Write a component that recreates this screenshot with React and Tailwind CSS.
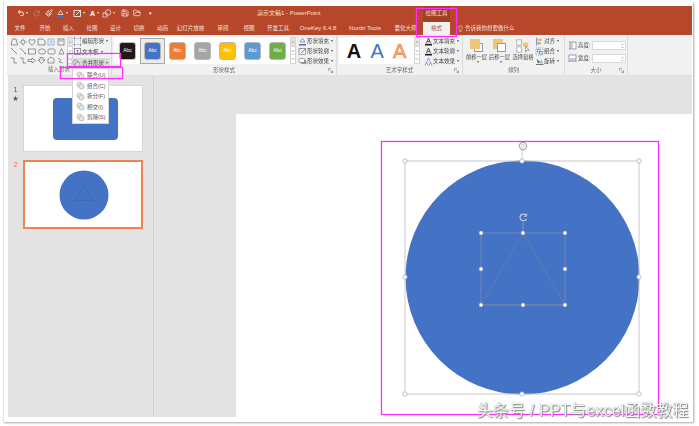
import {Undo2, RotateCw, Paintbrush, Save, FolderOpen, Lightbulb, ChevronDown, ChevronUp} from 'lucide-react';

const FONT = 'font-["Liberation_Sans","Noto_Sans_CJK_SC",sans-serif]';

const tabs = [
    ['文件', 'w-[26px] text-[5.5px]'],
    ['开始', 'w-[24px] text-[5.5px]'],
    ['插入', 'w-[23px] text-[5.5px]'],
    ['绘图', 'w-[24px] text-[5.5px]'],
    ['设计', 'w-[23px] text-[5.5px]'],
    ['切换', 'w-[24px] text-[5.5px]'],
    ['动画', 'w-[23px] text-[5.5px]'],
    ['幻灯片放映', 'w-[33px] text-[5.5px]'],
    ['审阅', 'w-[32px] text-[5.5px]'],
    ['视图', 'w-[20px] text-[5.5px]'],
    ['开发工具', 'w-[38px] text-[5.5px]'],
    ['OneKey 6.4.8', 'w-[42px] text-[6px]'],
    ['Nordri Tools', 'w-[52px] text-[6px]'],
    ['囊化大师', 'w-[29px] text-[5.5px]'],
];

const swatches = ['bg-[#231815]', 'bg-[#4472c4]', 'bg-[#ed7d31]', 'bg-[#a5a5a5]', 'bg-[#ffc000]', 'bg-[#5b9bd5]', 'bg-[#70ad47]'];

const mergeItems = ['联合(U)', '组合(C)', '拆分(F)', '相交(I)', '剪除(S)'];

const PINK = 'absolute border border-[#ff2eff] shadow-[0_0_1px_#ff33ff,inset_0_0_1px_#ff33ff]';

const Caret = () => <span className="ml-[2px] inline-block border-x-[1.5px] border-t-[2px] border-x-transparent border-t-[#555]"></span>;

const QatCaret = () => <span className="inline-block w-0 border-x-[1.5px] border-t-[2px] border-x-transparent border-t-[#f6e3dc] ml-[1px]"></span>;

const Launcher = () => (
    <svg width="5" height="5" viewBox="0 0 5 5" className="absolute right-[3px] bottom-[2px]">
        <path d="M.5 .5H3M.5 .5V3M2 2L4.5 4.5M4.5 2.5V4.5H2.5" stroke="#777" strokeWidth=".6" fill="none" />
    </svg>
);

const Scroller = () => (
    <div className="flex flex-col w-[6px] h-[27px] border border-[#d4d4d4] bg-white text-[#555]">
        <div className="flex-1 flex items-center justify-center bg-[#e4e4e4]"><ChevronUp size={4} strokeWidth={3} /></div>
        <div className="flex-1 flex items-center justify-center border-y border-[#d4d4d4]"><ChevronDown size={4} strokeWidth={3} /></div>
        <div className="flex-1 flex items-center justify-center"><ChevronDown size={4} strokeWidth={3} /></div>
    </div>
);

const MenuRow = ({icon, label}) => (
    <div className="flex items-center h-[10.5px] text-[5.5px] text-[#444] whitespace-nowrap">
        <span className="w-[9px] flex justify-center shrink-0">{icon}</span>
        <span>{label}</span>
        <Caret />
    </div>
);

const Group = ({label, className, launcher, children}) => (
    <div className={`relative flex flex-col border-r border-[#dadada] h-full ${className}`}>
        <div className="flex h-[31px]">{children}</div>
        <div className="h-[10px] text-center text-[5.5px] leading-[9px] text-[#666]">{label}</div>
        {launcher && <Launcher />}
    </div>
);

const ShapeGallery = () => (
    <svg width="58" height="28" viewBox="0 0 58 28" fill="none" stroke="#555" strokeWidth=".6">
        <path d="M2 8L3.5 2H7L8.5 8Z" />
        <circle cx="14" cy="5" r="2" /><path d="M14 1.5V2.5M14 7.5V8.5M10.5 5H11.5M16.5 5H17.5" />
        <path d="M23 8.5L20 5Q19.5 2 22 2.5L23 3.5L24 2.5Q26.5 2 26 5Z" />
        <path d="M29 2H34L36 4V8H29Z" />
        <rect x="39" y="2" width="6" height="6" stroke="#5b9bd5" /><rect x="40.5" y="3.5" width="3" height="3" fill="#bcd" stroke="none" />
        <rect x="49" y="2" width="6" height="6" /><path d="M50 4H54" />
        <path d="M2 11L8 17M11 11L17 17L15.5 16.5" />
        <rect x="19.5" y="12" width="7" height="5" />
        <ellipse cx="33" cy="14.5" rx="3.5" ry="2.6" />
        <rect x="39" y="12" width="7" height="5" rx="1.5" />
        <path d="M50 17L52.5 11.5L55 17Z" />
        <path d="M2 21H5V26H8M11 21H14V26H17" />
        <path d="M19 22.5H23V21L26.5 23.5L23 26V24.5H19Z" />
        <path d="M31 20.5H34V23H36L32.5 26.5L29 23H31Z" />
        <path d="M39 26V22L42 20L45 22V26Z" />
        <path d="M49 21L52 23L50 25L54 26" />
    </svg>
);

const TinyIcon = ({kind}) => {
    if (kind === 'fill') return <svg width="9" height="9" viewBox="0 0 9 9"><path d="M2 5L4.5 1.5L7 5Z" fill="#fff" stroke="#555" strokeWidth=".6" /><rect x="1" y="7" width="7" height="1.5" fill="#4472c4" /></svg>;
    if (kind === 'line') return <svg width="9" height="9" viewBox="0 0 9 9"><rect x="1" y="1.5" width="6.5" height="6" fill="#fff" stroke="#666" strokeWidth=".6" /><path d="M3 6L8 1.5" stroke="#4472c4" strokeWidth="1" /></svg>;
    if (kind === 'effect') return <svg width="9" height="9" viewBox="0 0 9 9"><rect x="3" y="3" width="5.5" height="4" rx="1" fill="#999" /><rect x="1" y="1.5" width="5.5" height="4" rx="1" fill="#fff" stroke="#666" strokeWidth=".6" /></svg>;
    if (kind === 'textFill') return <svg width="9" height="9" viewBox="0 0 9 9"><path d="M2.5 6L4.5 1L6.5 6M3.3 4.5H5.7" stroke="#333" strokeWidth=".8" fill="none" /><rect x="1" y="6.8" width="7" height="1.7" fill="#222" /></svg>;
    if (kind === 'textEffect') return <svg width="9" height="9" viewBox="0 0 9 9" fill="none" stroke="#5b7fb5" strokeWidth=".7"><path d="M3 4.5L4.5 1L6 4.5" /><path d="M1 8.5L2.5 5L4 8.5M5 8.5L6.5 5L8 8.5" /></svg>;
    if (kind === 'edit') return <svg width="9" height="9" viewBox="0 0 9 9"><rect x="1.5" y="1.5" width="6" height="6" fill="none" stroke="#4472c4" strokeWidth=".6" strokeDasharray="1 1" /><path d="M1 1h1M7 1h1M1 8h1M7 8h1" stroke="#333" strokeWidth="1" /></svg>;
    if (kind === 'box') return <svg width="9" height="9" viewBox="0 0 9 9"><rect x="1.5" y="1.5" width="6" height="6" fill="#fff" stroke="#555" strokeWidth=".6" /><path d="M3 3.5H6M4.5 3.5V6" stroke="#555" strokeWidth=".6" /></svg>;
    if (kind === 'merge') return <svg width="9" height="9" viewBox="0 0 9 9" fill="#ddd" stroke="#777" strokeWidth=".6"><circle cx="3.5" cy="3.5" r="2.5" /><circle cx="5.5" cy="5.5" r="2.5" /></svg>;
    if (kind === 'align') return <svg width="9" height="9" viewBox="0 0 9 9"><path d="M1.5 .5V8.5" stroke="#4472c4" strokeWidth=".7" /><rect x="2.5" y="1.5" width="4" height="2.5" fill="#e9b35f" /><rect x="2.5" y="5" width="3" height="2.5" fill="#aaa" /></svg>;
    if (kind === 'group') return <svg width="9" height="9" viewBox="0 0 9 9"><rect x="1" y="1" width="7" height="7" fill="none" stroke="#4472c4" strokeWidth=".6" strokeDasharray="1 1" /><rect x="2.5" y="2.5" width="2.5" height="2.5" fill="#fff" stroke="#555" strokeWidth=".5" /><rect x="4.5" y="4.5" width="2.5" height="2.5" fill="#fff" stroke="#555" strokeWidth=".5" /></svg>;
    return <svg width="9" height="9" viewBox="0 0 9 9"><path d="M1 7.5H8.5" stroke="#555" strokeWidth=".8" /><path d="M3 6.5L1.5 2L5 5Z" fill="#555" /><path d="M6 2L8 6.5H5Z" fill="#8bb" /></svg>;
};

const ArrangeBig = ({label, back}) => (
    <div className="flex flex-col items-center w-[23px]">
        <div className="relative w-[13px] h-[14px] mt-[4px]">
            {back ? (
                <>
                    <div className="w-[10px] h-[10px] bg-[#efc778]"></div>
                    <div className="absolute left-[4px] top-[4px] w-[9px] h-[9px] bg-white border border-[#999]"></div>
                </>
            ) : (
                <>
                    <div className="absolute left-[4px] top-[4px] w-[9px] h-[9px] bg-white border border-[#999]"></div>
                    <div className="absolute left-0 top-0 w-[10px] h-[10px] bg-[#efc778]"></div>
                </>
            )}
        </div>
        <div className="text-[5.25px] leading-[8px] text-[#444] whitespace-nowrap">{label}</div>
        <Caret />
    </div>
);

const SizeRow = ({label, tall}) => (
    <div className="flex items-center h-[9px] mb-[4px] text-[5.5px] text-[#444]">
        <span className="w-[11px] flex justify-center">
            {tall ? (
                <svg width="9" height="9" viewBox="0 0 9 9"><path d="M1 1H3M1 8H3M2 1V8" stroke="#4472c4" strokeWidth=".7" /><rect x="4" y="1" width="4" height="7" fill="#fff" stroke="#666" strokeWidth=".6" /></svg>
            ) : (
                <svg width="9" height="9" viewBox="0 0 9 9"><path d="M1 7H8M1 6V8M8 6V8" stroke="#4472c4" strokeWidth=".7" /><rect x="1" y="1" width="7" height="4" fill="#fff" stroke="#666" strokeWidth=".6" /></svg>
            )}
        </span>
        <span className="w-[14px]">{label}</span>
        <div className="flex items-center justify-end w-[34px] h-[9px] bg-white border border-[#d8d8d8] pr-[1px] text-[#555]">
            <div className="flex flex-col">
                <ChevronUp size={3} strokeWidth={4} />
                <ChevronDown size={3} strokeWidth={4} />
            </div>
        </div>
    </div>
);

const SlideCanvas = () => {
    const handles = [[405, 161], [522, 161], [639, 161], [405, 277], [639, 277], [405, 394], [522, 394], [639, 394]];
    const inner = [[481, 233], [523, 233], [565, 233], [481, 269], [565, 269], [481, 305], [523, 305], [565, 305]];
    return (
        <svg className="block" width="456" height="303" viewBox="236 114 456 303" fill="none">
            <circle cx="522.5" cy="277.5" r="117" fill="#4472c4" />
            <rect x="405" y="161" width="234" height="233" stroke="#c8c8c8" strokeWidth="1" />
            <path d="M522 161V150" stroke="#c8c8c8" strokeWidth=".9" />
            <circle cx="523" cy="146" r="3.6" stroke="#aaa" strokeWidth="1.2" />
            <circle cx="523" cy="146" r="1.6" stroke="#bbb" strokeWidth=".7" />
            {handles.map(([x, y]) => <circle key={`${x}-${y}`} cx={x} cy={y} r="2.2" fill="#fff" stroke="#aaa" strokeWidth=".7" />)}
            <path d="M523 233L481 305H565Z" stroke="#6d7f9f" strokeWidth=".8" />
            <rect x="481" y="233" width="84" height="72" stroke="#8d97ab" strokeWidth=".6" />
            <path d="M523 233V222" stroke="#aab3c6" strokeWidth=".6" />
            <path d="M526 215.2A3.4 3.4 0 1 0 526.4 219" stroke="#ddd" strokeWidth="1.1" />
            <path d="M526.6 213.5V216.2H524" stroke="#ddd" strokeWidth=".8" />
            {inner.map(([x, y]) => <circle key={`${x}-${y}`} cx={x} cy={y} r="1.9" fill="#fff" stroke="#999" strokeWidth=".4" />)}
        </svg>
    );
};

const App = () => {
    return (
        <div className={`relative w-[699px] h-[426px] bg-white overflow-hidden ${FONT}`}>
            <div className="blur-[0.4px]">
                <div className="ml-[3px] mt-[2px] w-[690px] h-[420px] pl-[3px] pt-[4px] bg-white border-l border-[#e4e4e4] shadow-[1px_1px_2px_#a8a8a8]">
                    <div className="w-[685px] h-[411px] flex flex-col">
                        {/* title + tabs */}
                        <div className="h-[29px] bg-[#b7472a] text-[#f6e3dc] shrink-0">
                            <div className="flex h-[16px] items-start">
                                <div className="w-[250px] h-[14px] flex items-center pl-[10px] text-white">
                                    <Undo2 size={8} strokeWidth={2.5} />
                                    <QatCaret />
                                    <RotateCw size={7} className="ml-[5px] opacity-40" />
                                    <Paintbrush size={8} className="ml-[5px]" />
                                    <svg width="9" height="9" viewBox="0 0 9 9" className="ml-[3px]"><path d="M2 5.5L4.5 1.5L7 5.5Z" fill="none" stroke="#fff" strokeWidth=".7" /><rect x="1" y="7" width="7" height="1.6" fill="#4472c4" /></svg>
                                    <QatCaret />
                                    <svg width="9" height="9" viewBox="0 0 9 9" fill="none" stroke="#fff" strokeWidth=".8" className="ml-[5px]"><rect x="1" y="1.5" width="6.5" height="6" /><path d="M3 6L8 1" /></svg>
                                    <QatCaret />
                                    <span className="ml-[5px] w-[6px] text-[7px] font-bold leading-none">A</span>
                                    <QatCaret />
                                    <svg width="10" height="9" viewBox="0 0 10 9" fill="none" stroke="#fff" strokeWidth=".6" className="ml-[3px]"><circle cx="6" cy="3.5" r="2.8" /><rect x="1" y="4" width="4" height="4" /></svg>
                                    <QatCaret />
                                    <Save size={8} className="ml-[6px]" />
                                    <FolderOpen size={8} className="ml-[4px]" />
                                    <span className="ml-[8px] text-[5px] leading-none">▾</span>
                                </div>
                                <div className="w-[60px] text-center text-[6px] leading-[14px] whitespace-nowrap">演示文稿1 - PowerPoint</div>
                                <div className="w-[106px]"></div>
                                <div className="w-[27px] h-[16px] bg-[#a33e25] text-center text-[5.5px] leading-[14px]">绘图工具</div>
                            </div>
                            <div className="flex h-[13px] items-start">
                                {tabs.map(([name, cls]) => (
                                    <div key={name} className={`${cls} text-center leading-[12px] whitespace-nowrap shrink-0`}>{name}</div>
                                ))}
                                <div className="ml-[3px] w-[27px] h-[13px] bg-[#f1f1f1] text-center text-[5.5px] leading-[13px] text-[#b7472a]">格式</div>
                                <div className="ml-[7px] flex items-center gap-[1px] h-[12px] text-[5.5px] whitespace-nowrap">
                                    <Lightbulb size={7} />
                                    <span>告诉我你想要做什么</span>
                                </div>
                            </div>
                        </div>

                        {/* ribbon */}
                        <div className="flex h-[41px] bg-[#f1f1f1] border-b border-[#e0e0e0] shrink-0">
                            <Group label="插入形状" className="w-[105px]" launcher>
                                <div className="ml-[2px] mt-[2px] flex">
                                    <ShapeGallery />
                                    <Scroller />
                                </div>
                                <div className="flex flex-col pt-[1px]">
                                    <MenuRow icon={<TinyIcon kind="edit" />} label="编辑形状" />
                                    <MenuRow icon={<TinyIcon kind="box" />} label="文本框" />
                                </div>
                            </Group>
                            <Group label="形状样式" className="w-[225px]" launcher>
                                <div className="ml-[2px] mt-[2px] flex">
                                    <div className="w-[176px] h-[27px] bg-white flex items-center pl-[5px] gap-[8px]">
                                        {swatches.map((color, i) => (
                                            <div key={color} className={i === 1 ? '-mx-[4px] p-[3px] border border-[#a8a8a8] bg-[#ececec]' : ''}>
                                                <div className={`${color} w-[17px] h-[18px] rounded-[3px] border border-[#b9b9b9] flex items-center justify-center text-[5px] text-white`}>Abc</div>
                                            </div>
                                        ))}
                                    </div>
                                    <Scroller />
                                </div>
                                <div className="flex flex-col pt-[1px] ml-[2px]">
                                    <MenuRow icon={<TinyIcon kind="fill" />} label="形状填充" />
                                    <MenuRow icon={<TinyIcon kind="line" />} label="形状轮廓" />
                                    <MenuRow icon={<TinyIcon kind="effect" />} label="形状效果" />
                                </div>
                            </Group>
                            <Group label="艺术字样式" className="w-[126px]" launcher>
                                <div className="ml-[2px] mt-[2px] flex">
                                    <div className="w-[75px] h-[27px] bg-white flex items-center justify-around px-[3px] text-[20px] leading-none">
                                        <span className="text-[#111] font-bold">A</span>
                                        <span className="text-[#4472c4]">A</span>
                                        <span className="text-[#f4b183] [-webkit-text-stroke:0.6px_#ed7d31]">A</span>
                                    </div>
                                    <Scroller />
                                </div>
                                <div className="flex flex-col pt-[1px] ml-[4px]">
                                    <MenuRow icon={<TinyIcon kind="textFill" />} label="文本填充" />
                                    <MenuRow icon={<TinyIcon kind="textFill" />} label="文本轮廓" />
                                    <MenuRow icon={<TinyIcon kind="textEffect" />} label="文本效果" />
                                </div>
                            </Group>
                            <Group label="排列" className="w-[102px]">
                                <div className="flex pl-[2px] w-[72px]">
                                    <ArrangeBig label="前移一层" />
                                    <ArrangeBig label="后移一层" back />
                                    <div className="flex flex-col items-center w-[24px]">
                                        <svg width="16" height="14" viewBox="0 0 16 16" className="mt-[4px]">
                                            <rect x="1" y="1" width="5" height="6" fill="#fff" stroke="#888" strokeWidth=".7" />
                                            <rect x="1" y="9" width="5" height="6" fill="#fff" stroke="#888" strokeWidth=".7" />
                                            <rect x="8" y="4" width="6" height="5" fill="#efc778" />
                                            <path d="M11 8L15 13L12.5 12.5L11 15Z" fill="#fff" stroke="#666" strokeWidth=".6" />
                                        </svg>
                                        <div className="text-[5.25px] leading-[8px] text-[#444] whitespace-nowrap">选择窗格</div>
                                    </div>
                                </div>
                                <div className="flex flex-col pt-[1px]">
                                    <MenuRow icon={<TinyIcon kind="align" />} label="对齐" />
                                    <MenuRow icon={<TinyIcon kind="group" />} label="组合" />
                                    <MenuRow icon={<TinyIcon kind="rotate" />} label="旋转" />
                                </div>
                            </Group>
                            <Group label="大小" className="w-[63px]" launcher>
                                <div className="flex flex-col pt-[6px] pl-[2px]">
                                    <SizeRow label="高度:" tall />
                                    <SizeRow label="宽度:" />
                                </div>
                            </Group>
                        </div>

                        {/* thumbnails + slide */}
                        <div className="flex flex-1 min-h-0 bg-[#e3e3e3] ml-[1px]">
                            <div className="w-[146px] shrink-0 border-r border-[#d0d0d0] pt-[9px]">
                                <div className="flex">
                                    <div className="w-[15px] text-center text-[7px] leading-[9px] text-[#555]">
                                        <div>1</div>
                                        <div className="text-[6px]">★</div>
                                    </div>
                                    <div className="w-[120px] h-[67px] bg-white border border-[#d6d6d6] flex justify-center pt-[12px] pl-[5px]">
                                        <div className="w-[65px] h-[42px] rounded-[4px] bg-[#4472c4]"></div>
                                    </div>
                                </div>
                                <div className="flex mt-[8px]">
                                    <div className="w-[15px] text-center text-[7px] leading-[9px] text-[#e2744b]">2</div>
                                    <div className="w-[120px] h-[69px] bg-white border-2 border-[#ef8352] flex items-center justify-center pl-[2px]">
                                        <svg width="50" height="50" viewBox="0 0 50 50">
                                            <circle cx="25" cy="25" r="24.5" fill="#4472c4" />
                                            <path d="M25 15.5L16.5 30.5H33.5Z" fill="none" stroke="#3f66ae" strokeWidth=".8" />
                                        </svg>
                                    </div>
                                </div>
                            </div>
                            <div className="flex-1 pt-[38px] pl-[82px]">
                                <div className="bg-white h-[303px] w-[456px]">
                                    <SlideCanvas />
                                </div>
                            </div>
                        </div>
                    </div>
                </div>

                {/* merge shapes dropdown */}
                <div className="absolute left-[71px] top-[56px] w-[39px] h-[10px] bg-[#dcdcdc]">
                    <div className="flex items-center h-full text-[5.5px] text-[#444] whitespace-nowrap">
                        <span className="w-[11px] flex justify-center"><TinyIcon kind="merge" /></span>
                        <span>合并形状</span>
                        <Caret />
                    </div>
                </div>
                <div className="absolute left-[72px] top-[66px] w-[37px] h-[56px] bg-white border border-[#d4d4d4] pt-[1px]">
                    {mergeItems.map((item) => (
                        <div key={item} className="flex items-center h-[10.5px] text-[5.5px] text-[#555] whitespace-nowrap">
                            <span className="w-[14px] flex justify-center opacity-70"><TinyIcon kind="merge" /></span>
                            <span>{item}</span>
                        </div>
                    ))}
                </div>
            </div>

            {/* pink annotation boxes */}
            <div className={`${PINK} left-[416px] top-[8px] w-[41px] h-[29px]`}></div>
            <div className={`${PINK} left-[67px] top-[53px] w-[54px] h-[14px]`}></div>
            <div className={`${PINK} left-[60px] top-[67px] w-[63px] h-[12px]`}></div>
            <div className={`${PINK} left-[381px] top-[141px] w-[278px] h-[274px]`}></div>

            {/* watermark */}
            <div className="absolute left-[477px] top-[401px] text-[16px] leading-[20px] tracking-[0.1px] text-[#f6f6f6] whitespace-nowrap blur-[0.3px] [text-shadow:0_0_1px_#666,1px_1px_1px_#888]">头条号 / PPT与excel函数教程</div>
        </div>
    );
};

export default App;
